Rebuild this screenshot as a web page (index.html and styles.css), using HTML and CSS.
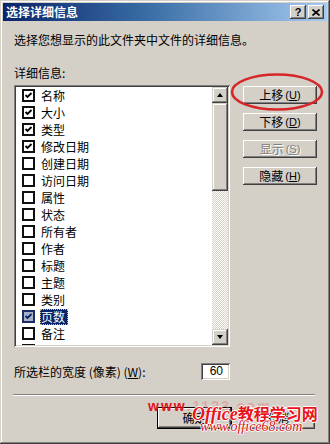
FILE: index.html
```html
<!DOCTYPE html>
<html lang="zh-CN">
<head>
<meta charset="utf-8">
<title>选择详细信息</title>
<link rel="stylesheet" href="styles.css">
</head>
<body>
<div class="window">
  <div class="titlebar">
    <span class="title">选择详细信息</span>
    <div class="caps">
      <span class="cap help">?</span>
      <span class="cap"><svg width="8" height="7" viewBox="0 0 8 7"><path d="M0.5 0.5 L7.5 6.5 M7.5 0.5 L0.5 6.5" stroke="#000" stroke-width="1.6"/></svg></span>
    </div>
  </div>
  <div class="body">
    <p class="desc">选择您想显示的此文件夹中文件的详细信息。</p>
    <p class="label">详细信息:</p>
    <div class="main">
      <div class="list">
        <div class="items">
          <div class="item"><span class="cb on"><svg viewBox="0 0 9 9"><path d="M1.5 4 L3.5 6 L7.5 2" /></svg></span><span class="txt">名称</span></div>
          <div class="item"><span class="cb on"><svg viewBox="0 0 9 9"><path d="M1.5 4 L3.5 6 L7.5 2" /></svg></span><span class="txt">大小</span></div>
          <div class="item"><span class="cb on"><svg viewBox="0 0 9 9"><path d="M1.5 4 L3.5 6 L7.5 2" /></svg></span><span class="txt">类型</span></div>
          <div class="item"><span class="cb on"><svg viewBox="0 0 9 9"><path d="M1.5 4 L3.5 6 L7.5 2" /></svg></span><span class="txt">修改日期</span></div>
          <div class="item"><span class="cb"></span><span class="txt">创建日期</span></div>
          <div class="item"><span class="cb"></span><span class="txt">访问日期</span></div>
          <div class="item"><span class="cb"></span><span class="txt">属性</span></div>
          <div class="item"><span class="cb"></span><span class="txt">状态</span></div>
          <div class="item"><span class="cb"></span><span class="txt">所有者</span></div>
          <div class="item"><span class="cb"></span><span class="txt">作者</span></div>
          <div class="item"><span class="cb"></span><span class="txt">标题</span></div>
          <div class="item"><span class="cb"></span><span class="txt">主题</span></div>
          <div class="item"><span class="cb"></span><span class="txt">类别</span></div>
          <div class="item"><span class="cb on sel"><svg viewBox="0 0 9 9"><path d="M1.5 4 L3.5 6 L7.5 2" /></svg></span><span class="txt selected">页数</span></div>
          <div class="item"><span class="cb"></span><span class="txt">备注</span></div>
          <div class="item"><span class="cb"></span><span class="txt">版权</span></div>
        </div>
        <div class="scrollbar">
          <div class="sb-btn"><span class="arrow up"></span></div>
          <div class="thumb"></div>
          <div class="track"></div>
          <div class="sb-btn"><span class="arrow down"></span></div>
        </div>
      </div>
      <div class="side">
        <div class="btn">上移<span class="acc">(<u>U</u>)</span></div>
        <div class="btn">下移<span class="acc">(<u>D</u>)</span></div>
        <div class="btn disabled">显示<span class="acc">(<u>S</u>)</span></div>
        <div class="btn">隐藏<span class="acc">(<u>H</u>)</span></div>
      </div>
    </div>
    <div class="width-row">
      <span>所选栏的宽度 (像素) (<u>W</u>):</span>
      <div class="num">60</div>
    </div>
    <div class="sep"></div>
    <div class="actions">
      <div class="btn big default">确定</div>
      <div class="btn big">取消</div>
    </div>
  </div>

  <svg class="ellipse" width="96" height="40" viewBox="0 0 96 40"><ellipse cx="47" cy="20" rx="45" ry="17.5" fill="none" stroke="#d6262a" stroke-width="2.6"/></svg>

  <div class="wm-bg"><b>www</b>.1123.com</div>
  <div class="wm-main"><span class="en">Office</span>教程学习网</div>
  <div class="wm-url">www.office68.com</div>
</div>
</body>
</html>
```
FILE: styles.css
```css
html, body {
  margin: 0;
  padding: 0;
}
body {
  font-family: "Noto Sans CJK SC", "Noto Sans", sans-serif;
  font-size: 12px;
  color: #000;
}
p { margin: 0; }

.window {
  position: relative;
  width: 330px;
  height: 444px;
  box-sizing: border-box;
  padding: 3px;
  background: #D4D0C8;
  box-shadow: inset -1px -1px #404040, inset 1px 1px #D4D0C8, inset -2px -2px #808080, inset 2px 2px #fff;
  display: flex;
  flex-direction: column;
  overflow: hidden;
}

.titlebar {
  height: 18px;
  flex: none;
  background: linear-gradient(to right, #0A246A 0%, #3A6EA5 45%, #A6CAF0 100%);
  display: flex;
  align-items: center;
  justify-content: space-between;
  padding: 0 3px 0 3px;
}
.title {
  color: #fff;
  font-weight: bold;
  font-size: 12px;
  line-height: 14px;
}
.caps { display: flex; gap: 2px; }
.cap {
  width: 16px;
  height: 14px;
  box-sizing: border-box;
  background: #D4D0C8;
  box-shadow: inset -1px -1px #404040, inset 1px 1px #fff, inset -2px -2px #808080;
  display: flex;
  align-items: center;
  justify-content: center;
}
.cap.help {
  font-family: "Liberation Sans", sans-serif;
  font-weight: bold;
  font-size: 11px;
  line-height: 12px;
}

.body {
  flex: 1;
  padding: 0 10px 0 11px;
  display: flex;
  flex-direction: column;
}
.desc { margin-top: 12px; line-height: 14px; }
.label { margin-top: 19px; line-height: 14px; }

.main {
  margin-top: 5px;
  display: flex;
  gap: 13px;
}
.list {
  width: 216px;
  height: 262px;
  box-sizing: border-box;
  padding: 2px;
  background: #fff;
  box-shadow: inset 1px 1px #808080, inset -1px -1px #fff, inset 2px 2px #404040, inset -2px -2px #D4D0C8;
  display: flex;
}
.items {
  flex: 1;
  overflow: hidden;
}
.item {
  height: 17px;
  display: flex;
  align-items: center;
  padding-left: 6px;
}
.cb {
  width: 13px;
  height: 13px;
  box-sizing: border-box;
  border: 2px solid #111;
  background: #fff;
  display: flex;
  align-items: center;
  justify-content: center;
  flex: none;
}
.cb svg {
  width: 9px;
  height: 9px;
}
.cb svg path {
  fill: none;
  stroke: #000;
  stroke-width: 1.9;
}
.cb.sel {
  background: #a9b1c9;
  border-color: #1b2c66;
}
.cb.sel svg path { stroke: #0A246A; }
.txt {
  margin-left: 5px;
  padding: 0 3px 0 1px;
  line-height: 16px;
}
.txt.selected {
  background: #0A246A;
  color: #fff;
  outline: 1px dotted #e0c060;
  outline-offset: -1px;
}

.scrollbar {
  width: 16px;
  display: flex;
  flex-direction: column;
}
.sb-btn, .thumb {
  background: #D4D0C8;
  box-shadow: inset -1px -1px #404040, inset 1px 1px #D4D0C8, inset -2px -2px #808080, inset 2px 2px #fff;
}
.sb-btn {
  height: 16px;
  display: flex;
  align-items: center;
  justify-content: center;
  flex: none;
}
.thumb { height: 88px; flex: none; }
.track {
  flex: 1;
  background: repeating-conic-gradient(#fff 0 25%, #D4D0C8 0 50%) 0 0 / 2px 2px;
}
.arrow {
  width: 0;
  height: 0;
  border-left: 3.5px solid transparent;
  border-right: 3.5px solid transparent;
}
.arrow.up { border-bottom: 4px solid #000; }
.arrow.down { border-top: 4px solid #000; }

.side {
  width: 74px;
  display: flex;
  flex-direction: column;
  gap: 9px;
  padding-top: 1px;
}
.btn {
  height: 18px;
  box-sizing: border-box;
  background: #D4D0C8;
  box-shadow: inset -1px -1px #404040, inset 1px 1px #fff, inset -2px -2px #808080;
  display: flex;
  align-items: center;
  justify-content: center;
  line-height: 14px;
}
.acc {
  font-family: "Liberation Sans", sans-serif;
  font-size: 11px;
  margin-left: 2px;
}
.btn.disabled {
  color: #808080;
  text-shadow: 1px 1px #fff;
}

.width-row {
  margin-top: 16px;
  width: 216px;
  height: 16px;
  display: flex;
  align-items: center;
  justify-content: space-between;
}
.num {
  width: 29px;
  height: 17px;
  box-sizing: border-box;
  background: #fff;
  box-shadow: inset 1px 1px #808080, inset -1px -1px #fff, inset 2px 2px #404040, inset -2px -2px #D4D0C8;
  font-family: "Liberation Sans", sans-serif;
  font-size: 12px;
  text-align: right;
  padding-right: 7px;
  line-height: 17px;
}

.sep {
  margin-top: 15px;
  margin-left: -1px;
  width: 302px;
  height: 0;
  border-top: 1px solid #808080;
  border-bottom: 1px solid #fff;
}
.actions {
  margin-top: 11px;
  display: flex;
  justify-content: flex-end;
  gap: 8px;
  padding-right: 2px;
}
.btn.big {
  width: 75px;
  height: 22px;
}
.btn.default {
  box-shadow: inset 0 0 0 1px #000, inset -2px -2px #404040, inset 2px 2px #fff, inset -3px -3px #808080;
}

.ellipse {
  position: absolute;
  left: 230px;
  top: 72px;
}

.wm-bg {
  position: absolute;
  left: 148px;
  top: 398px;
  font-family: "Liberation Sans", sans-serif;
  font-size: 14px;
  font-weight: bold;
  color: rgba(225, 120, 120, 0.45);
  letter-spacing: 2px;
}
.wm-bg b { color: #e3141b; }
.wm-main {
  position: absolute;
  left: 192px;
  top: 403px;
  font-size: 16px;
  font-weight: bold;
  color: #e8141c;
  line-height: 20px;
  text-shadow: 1px 0 #fff, -1px 0 #fff, 0 1px #fff, 0 -1px #fff;
}
.wm-main .en {
  font-family: "Liberation Serif", serif;
  font-style: italic;
  font-size: 18px;
}
.wm-url {
  position: absolute;
  left: 200px;
  top: 419px;
  font-family: "Liberation Serif", serif;
  font-style: italic;
  font-size: 14px;
  color: #d21218;
  line-height: 16px;
  text-shadow: 1px 0 #fff, -1px 0 #fff, 0 1px #fff, 0 -1px #fff;
}
```
